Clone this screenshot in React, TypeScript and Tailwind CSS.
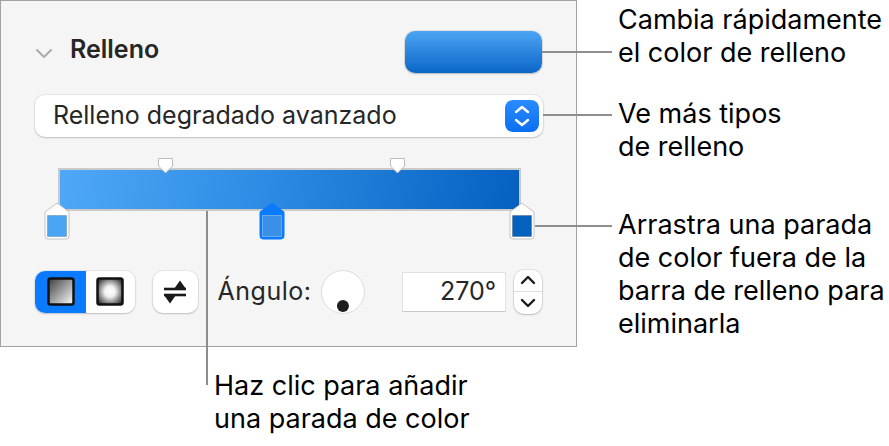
import React from "react";

function Stop({ color, selected }: { color: string; selected?: boolean }) {
  // marcador de parada de color bajo la barra
  return (
    <svg width="26" height="38" viewBox="0 0 26 38">
      <path
        d="M1 10 L13 1 L25 10 V34 a3 3 0 0 1 -3 3 H4 a3 3 0 0 1 -3 -3 Z"
        fill={selected ? "#0a7aff" : "#ffffff"}
        stroke={selected ? "#0a7aff" : "#c4c4c4"}
        strokeWidth="1"
      />
      <rect
        x="3.5"
        y="13.5"
        width="19"
        height="21"
        fill={color}
        stroke={selected ? "#66aaf2" : "rgba(0,0,0,0.18)"}
        strokeWidth="1"
      />
    </svg>
  );
}

function Midpoint() {
  return (
    <svg width="17" height="16" viewBox="0 0 17 16">
      <path d="M1.5 0.5 H15.5 V8 L8.5 15 L1.5 8 Z" fill="#ffffff" stroke="#bdbdbd" strokeWidth="1" strokeLinejoin="round" />
    </svg>
  );
}

export default function App() {
  return (
    <div className="relative w-[889px] h-[446px] bg-white font-['Inter','Noto_Sans',sans-serif] text-[#1d1d1f] overflow-hidden">
      <div className="flex">
        {/* panel */}
        <div className="w-[577px] h-[347px] shrink-0 border border-[#a2a2a2] bg-[#f5f5f5] pl-[34px] pr-[34px] pt-[30px] flex flex-col">
          <div className="flex items-center justify-between h-[42px]">
            <div className="flex items-center">
              <svg width="18" height="11" viewBox="0 0 18 11" className="mt-[3px]">
                <path d="M2 2 L9 9 L16 2" fill="none" stroke="#ababab" strokeWidth="2" strokeLinecap="round" strokeLinejoin="round" />
              </svg>
              <span className="ml-[17px] text-[25px] font-semibold text-[#262626] -mt-[4px]">Relleno</span>
            </div>
            <div className="w-[137px] h-[42px] rounded-[10px] bg-[linear-gradient(180deg,#4ca5f2,#0b66c8)] shadow-[0_0_0_1px_rgba(0,0,0,0.07),0_1px_2px_rgba(0,0,0,0.2)]" />
          </div>

          <div className="mt-[22px] w-[508px] h-[42px] rounded-[10px] bg-white shadow-[0_0_0_1px_rgba(0,0,0,0.05),0_1px_2px_rgba(0,0,0,0.18)] flex items-center justify-between pl-[18px] pr-[4px]">
            <span className="text-[25px] text-[#262626]">Relleno degradado avanzado</span>
            <div className="w-[34px] h-[32px] rounded-[8px] bg-[linear-gradient(180deg,#2a8cff,#0a6ff0)] flex items-center justify-center">
              <svg width="16" height="22" viewBox="0 0 16 22">
                <path d="M2 7 L8 2 L14 7" fill="none" stroke="#fff" strokeWidth="2.4" strokeLinecap="round" strokeLinejoin="round" />
                <path d="M2 15 L8 20 L14 15" fill="none" stroke="#fff" strokeWidth="2.4" strokeLinecap="round" strokeLinejoin="round" />
              </svg>
            </div>
          </div>

          {/* barra de degradado */}
          <div className="relative mt-[21px] h-[82px]">
            <div className="ml-[23px] mt-[10px] w-[463px] h-[43px] border-2 border-[#cacaca] bg-[linear-gradient(100deg,#4fa8f7,#2d8be3_45%,#0560c0)]" />
            <div className="absolute left-[122px] top-0"><Midpoint /></div>
            <div className="absolute left-[354px] top-0"><Midpoint /></div>
            <div className="absolute left-[9px] top-[44px]"><Stop color="#4ba5f5" /></div>
            <div className="absolute left-[224px] top-[44px]"><Stop color="#3a8fe6" selected /></div>
            <div className="absolute left-[474px] top-[44px]"><Stop color="#0561c0" /></div>
          </div>

          {/* fila inferior */}
          <div className="mt-[28px] h-[47px] flex items-center">
            <div className="w-[100px] h-[42px] rounded-[10px] overflow-hidden flex shadow-[0_0_0_1px_rgba(0,0,0,0.05),0_1px_2px_rgba(0,0,0,0.18)]">
              <div className="w-[51px] h-full bg-[#0a7aff] flex items-center justify-center">
                <svg width="28" height="29" viewBox="0 0 28 29">
                  <defs>
                    <linearGradient id="lin" x1="0" y1="0" x2="1" y2="1">
                      <stop offset="0" stopColor="#3c3c3c" />
                      <stop offset="1" stopColor="#ffffff" />
                    </linearGradient>
                  </defs>
                  <rect x="1.5" y="1.5" width="25" height="26" rx="2" fill="url(#lin)" stroke="#111" strokeWidth="2.5" />
                </svg>
              </div>
              <div className="flex-1 h-full bg-white flex items-center justify-center">
                <svg width="28" height="29" viewBox="0 0 28 29">
                  <defs>
                    <radialGradient id="rad" cx="0.5" cy="0.5" r="0.6">
                      <stop offset="0" stopColor="#ffffff" />
                      <stop offset="0.35" stopColor="#f0f0f0" />
                      <stop offset="1" stopColor="#3a3a3a" />
                    </radialGradient>
                  </defs>
                  <rect x="1.5" y="1.5" width="25" height="26" rx="2" fill="url(#rad)" stroke="#111" strokeWidth="2.5" />
                </svg>
              </div>
            </div>

            <div className="ml-[18px] w-[45px] h-[42px] rounded-[10px] bg-white shadow-[0_0_0_1px_rgba(0,0,0,0.05),0_1px_2px_rgba(0,0,0,0.18)] flex items-center justify-center">
              <svg width="24" height="26" viewBox="0 0 24 26">
                <path d="M1 10 H23" stroke="#1a1a1a" strokeWidth="2.6" />
                <path d="M11 10 L17 1.5 L23 10 Z" fill="#1a1a1a" />
                <path d="M1 16 H23" stroke="#1a1a1a" strokeWidth="2.6" />
                <path d="M1 16 L7 24.5 L13 16 Z" fill="#1a1a1a" />
              </svg>
            </div>

            <span className="ml-[20px] text-[25px] tracking-[0.5px] text-[#262626]">Ángulo:</span>

            <svg width="46" height="46" viewBox="0 0 46 46" className="ml-[9px]">
              <circle cx="23" cy="23" r="21.5" fill="#ffffff" stroke="rgba(0,0,0,0.12)" strokeWidth="1" />
              <circle cx="23" cy="37" r="6" fill="#1d1d1d" />
            </svg>

            <div className="ml-[36px] w-[104px] h-[40px] bg-white border border-[#e2e2e2] border-b-[#c9c9c9] flex items-center justify-end pr-[9px]">
              <span className="text-[25px] text-[#262626]">270°</span>
            </div>

            <div className="ml-[8px] w-[28px] h-[44px] rounded-[10px] bg-white shadow-[0_0_0_1px_rgba(0,0,0,0.07),0_1px_2px_rgba(0,0,0,0.18)] flex flex-col">
              <div className="flex-1 flex items-center justify-center border-b border-[#e0e0e0]">
                <svg width="16" height="10" viewBox="0 0 16 10">
                  <path d="M2 8 L8 2 L14 8" fill="none" stroke="#1a1a1a" strokeWidth="2.4" strokeLinecap="round" strokeLinejoin="round" />
                </svg>
              </div>
              <div className="flex-1 flex items-center justify-center">
                <svg width="16" height="10" viewBox="0 0 16 10">
                  <path d="M2 2 L8 8 L14 2" fill="none" stroke="#1a1a1a" strokeWidth="2.4" strokeLinecap="round" strokeLinejoin="round" />
                </svg>
              </div>
            </div>
          </div>
        </div>

        {/* textos de las llamadas */}
        <div className="ml-[41px] flex flex-col text-[27px] leading-[33px] text-black">
          <p className="mt-[3px]">Cambia rápidamente<br />el color de relleno</p>
          <p className="mt-[28px]">Ve más tipos<br />de relleno</p>
          <p className="mt-[45px]">Arrastra una parada<br />de color fuera de la<br />barra de relleno para<br />eliminarla</p>
        </div>
      </div>

      <p className="ml-[214px] mt-[22px] text-[27px] leading-[33px] text-black">Haz clic para añadir<br />una parada de color</p>

      {/* líneas de llamada */}
      <div className="absolute left-[542px] top-[51px] w-[70px] h-[2px] bg-[#8e8e8e]" />
      <div className="absolute left-[543px] top-[114px] w-[69px] h-[2px] bg-[#8e8e8e]" />
      <div className="absolute left-[535px] top-[225px] w-[77px] h-[2px] bg-[#8e8e8e]" />
      <div className="absolute left-[206px] top-[211px] w-[2px] h-[174px] bg-[#8e8e8e]" />
    </div>
  );
}
